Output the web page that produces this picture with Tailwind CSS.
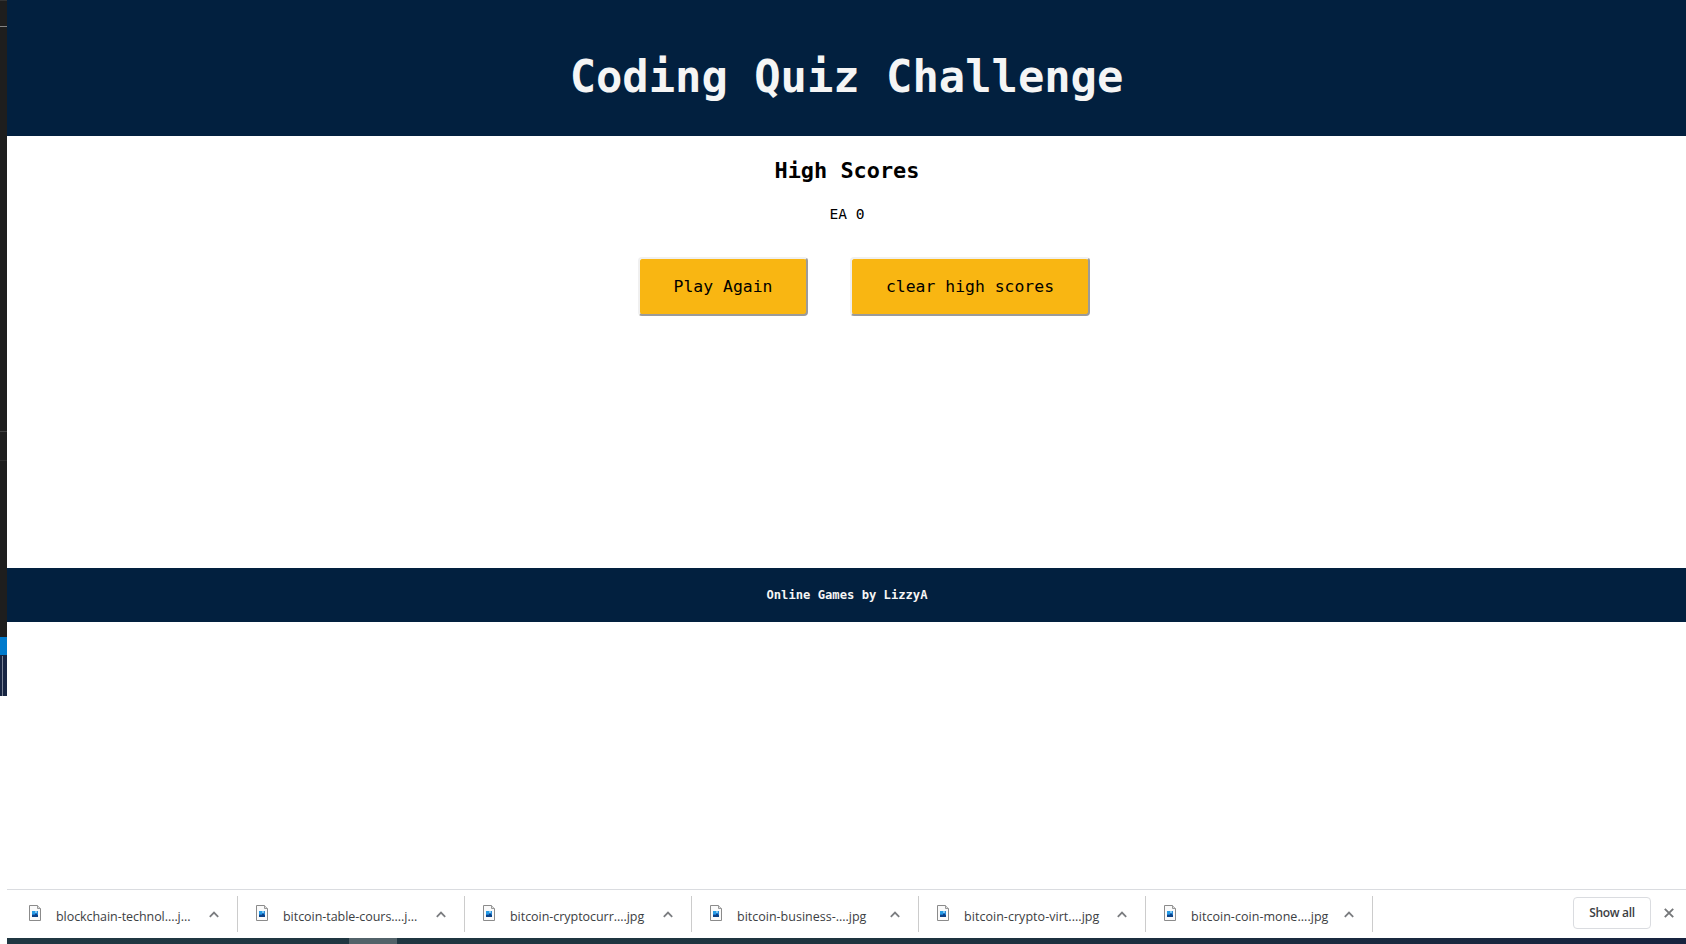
<!DOCTYPE html>
<html lang="en">
<head>
<meta charset="utf-8">
<title>Coding Quiz Challenge</title>
<script src="https://cdn.jsdelivr.net/npm/@tailwindcss/browser@4"></script>
</head>
<body class="flex h-[944px] w-[1686px] overflow-hidden bg-white">
<svg class="hidden">
  <symbol id="file" viewBox="0 0 12 16">
    <path d="M.5.5h8l3 3v12H.5z" fill="#fafafa" stroke="#8b8b8b"/>
    <path d="M8.5.5v3h3" fill="#ddd" stroke="#999"/>
    <path d="M3 6h6v6H3z" fill="#1b78cc"/>
    <path d="M3 6h3v3H3z" fill="#259be5"/>
    <path d="M6 6h2v2H6z" fill="#7bc8f5"/>
    <path d="M8 6h1v3H8z" fill="#2a8ad6"/>
    <path d="M3 10h3V9h2v1h1v2H3z" fill="#0d4388"/>
  </symbol>
  <symbol id="up" viewBox="0 0 10 7"><path d="M.8 5.8 5 1.6l4.2 4.2" fill="none" stroke="#7b7d80" stroke-width="1.8"/></symbol>
</svg>
<aside class="flex h-[696px] w-[7px] shrink-0 flex-col bg-[#1e1e1e]">
  <div class="h-px bg-[#333]"></div>
  <div class="mt-[25px] h-px bg-[#858585]"></div>
  <div class="mt-[404px] h-px bg-[#414141]"></div>
  <div class="mt-7 h-px bg-[#2d2d2d]"></div>
  <div class="mt-44 h-[18px] bg-[#007acc]"></div>
  <div class="flex-1 bg-[#172542] pt-px pl-0.5"><div class="h-full w-px bg-[#7b8496]"></div></div>
</aside>
<div class="flex min-w-0 flex-1 flex-col">
  <header class="h-[136px] bg-[#02203f] pt-[41px] text-center font-['DejaVu_Sans_Mono',monospace] text-[43.8px] leading-[72px] font-bold text-[#f5f5f5]"><h1>Coding Quiz Challenge</h1></header>
  <main class="h-[432px] text-center font-['DejaVu_Sans_Mono',monospace] text-black">
    <h2 class="pt-5 pl-px text-[21.9px] leading-[30px] font-bold">High Scores</h2>
    <p class="mt-[18px] pl-px text-[14.6px] leading-5">EA 0</p>
    <div class="mt-[33px] flex gap-[42px] pl-[631px] text-[16.43px]">
      <button class="h-[59px] w-[170px] rounded border-2 border-t-[#f0f0f0] border-r-[#9b9b9b] border-b-[#9b9b9b] border-l-[#f0f0f0] bg-[#f9b612] pt-0.5">Play Again</button>
      <button class="h-[59px] w-[240px] rounded border-2 border-t-[#f0f0f0] border-r-[#9b9b9b] border-b-[#9b9b9b] border-l-[#f0f0f0] bg-[#f9b612] pt-0.5">clear high scores</button>
    </div>
  </main>
  <footer class="h-[54px] bg-[#02203f] pt-[17px] pl-px text-center font-['DejaVu_Sans_Mono',monospace] text-[12.17px] leading-5 font-bold text-[#f5f5f5]">Online Games by LizzyA</footer>
  <div class="flex-1"></div>
  <div class="flex h-[49px] border-t border-[#dadce0] pt-1.5 pl-1 font-['Open_Sans',sans-serif] text-[12.5px] text-[#3c4043]">
    <div class="flex h-9 w-[227px] border-r border-[#ccc] pt-[9px] pl-[18px]"><svg class="h-4 w-3"><use href="#file"/></svg><span class="ml-[15px] w-[153px] pt-0.5 leading-5 tracking-[-0.06px] whitespace-nowrap">blockchain-technol....j...</span><svg class="mt-1.5 h-[7px] w-2.5"><use href="#up"/></svg></div>
    <div class="flex h-9 w-[227px] border-r border-[#ccc] pt-[9px] pl-[18px]"><svg class="h-4 w-3"><use href="#file"/></svg><span class="ml-[15px] w-[153px] pt-0.5 leading-5 tracking-[-0.04px] whitespace-nowrap">bitcoin-table-cours....j...</span><svg class="mt-1.5 h-[7px] w-2.5"><use href="#up"/></svg></div>
    <div class="flex h-9 w-[227px] border-r border-[#ccc] pt-[9px] pl-[18px]"><svg class="h-4 w-3"><use href="#file"/></svg><span class="ml-[15px] w-[153px] pt-0.5 leading-5 tracking-[-0.04px] whitespace-nowrap">bitcoin-cryptocurr....jpg</span><svg class="mt-1.5 h-[7px] w-2.5"><use href="#up"/></svg></div>
    <div class="flex h-9 w-[227px] border-r border-[#ccc] pt-[9px] pl-[18px]"><svg class="h-4 w-3"><use href="#file"/></svg><span class="ml-[15px] w-[153px] pt-0.5 leading-5 whitespace-nowrap">bitcoin-business-....jpg</span><svg class="mt-1.5 h-[7px] w-2.5"><use href="#up"/></svg></div>
    <div class="flex h-9 w-[227px] border-r border-[#ccc] pt-[9px] pl-[18px]"><svg class="h-4 w-3"><use href="#file"/></svg><span class="ml-[15px] w-[153px] pt-0.5 leading-5 tracking-[0.04px] whitespace-nowrap">bitcoin-crypto-virt....jpg</span><svg class="mt-1.5 h-[7px] w-2.5"><use href="#up"/></svg></div>
    <div class="flex h-9 w-[227px] border-r border-[#ccc] pt-[9px] pl-[18px]"><svg class="h-4 w-3"><use href="#file"/></svg><span class="ml-[15px] w-[153px] pt-0.5 leading-5 tracking-[0.04px] whitespace-nowrap">bitcoin-coin-mone....jpg</span><svg class="mt-1.5 h-[7px] w-2.5"><use href="#up"/></svg></div>
    <button class="mt-px ml-auto h-8 w-[78px] rounded border border-[#dadce0] text-[12px] font-semibold tracking-[-0.35px]">Show all</button>
    <svg class="mt-3 mr-3 ml-[13px] h-2.5 w-2.5" viewBox="0 0 10 10"><path d="m.8.8 8.4 8.4M9.2.8.8 9.2" stroke="#757779" stroke-width="1.9"/></svg>
  </div>
  <div class="h-1.5 bg-linear-to-r from-[#203742] via-[#1e343f] via-50% to-[#17233f] pl-[342px]"><div class="h-full w-12 bg-[#526269]"></div></div>
</div>
</body>
</html>
